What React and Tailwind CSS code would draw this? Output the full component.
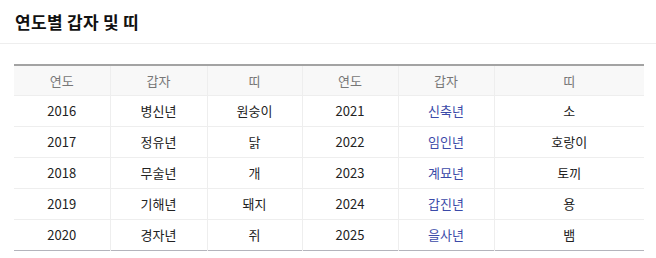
const rows = [
	["2016", "병신년", "원숭이", "2021", "신축년", "소"],
	["2017", "정유년", "닭", "2022", "임인년", "호랑이"],
	["2018", "무술년", "개", "2023", "계묘년", "토끼"],
	["2019", "기해년", "돼지", "2024", "갑진년", "용"],
	["2020", "경자년", "쥐", "2025", "을사년", "뱀"],
];

const heads = ["연도", "갑자", "띠", "연도", "갑자", "띠"];
const widths = ["w-[96px]", "w-[97px]", "w-[95px]", "w-[96px]", "w-[96px]", "w-[150px]"];

export default function App() {
	return (
		<div className="h-[258px] w-[656px] bg-white" style={{ fontFamily: '"Noto Sans CJK KR", "Noto Sans", sans-serif' }}>
			<div className="flex h-[44px] items-center border-b border-[#eeeeee] px-[15px]">
				<h2 className="m-0 text-[17px] font-bold leading-none tracking-[0.3px] text-[#111]">연도별 갑자 및 띠</h2>
			</div>

			<div className="px-[14px] pt-[20px]">
				<table className="w-[630px] table-fixed border-collapse border-t-2 border-b border-t-[#a3a3a3] border-b-[#b4b4bc] text-[13px]">
					<colgroup>
						{widths.map((w, i) => (
							<col key={i} className={w} />
						))}
					</colgroup>
					<thead>
						<tr className="h-[30px] bg-[#f8f8f8]">
							{heads.map((h, i) => (
								<th
									key={i}
									className="border-b border-l border-[#eeeeee] p-0 text-center font-normal text-[#777] first:border-l-0"
								>
									{h}
								</th>
							))}
						</tr>
					</thead>
					<tbody>
						{rows.map((r, ri) => (
							<tr key={ri} className="h-[31px]">
								{r.map((c, ci) => (
									<td
										key={ci}
										className={
											"border-l border-[#eeeeee] p-0 text-center first:border-l-0 " +
											(ri < rows.length - 1 ? "border-b " : "") +
											(ci === 4 ? "text-[#3b4aa8]" : "text-[#222]")
										}
									>
										{c}
									</td>
								))}
							</tr>
						))}
					</tbody>
				</table>
			</div>
		</div>
	);
}
